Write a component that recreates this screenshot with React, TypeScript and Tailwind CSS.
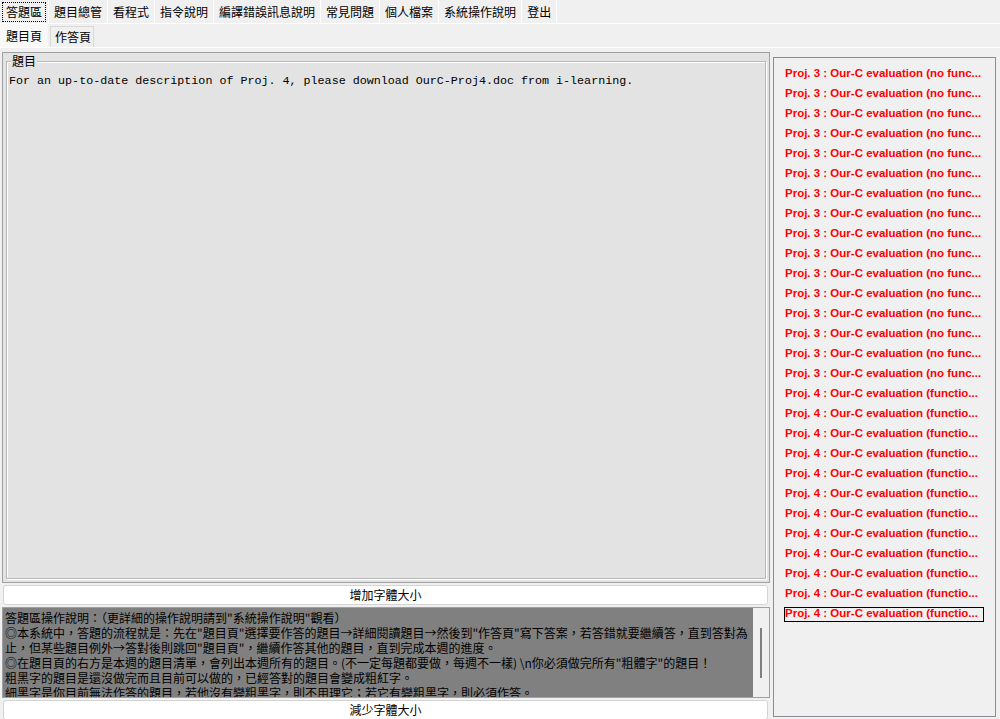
import React from 'react'

const cjk = "font-['Noto_Sans_CJK_TC','Noto_Sans_CJK_SC',sans-serif]"

const menus = ['答題區', '題目總管', '看程式', '指令說明', '編譯錯誤訊息說明', '常見問題', '個人檔案', '系統操作說明', '登出']

const helpLines = [
  '答題區操作說明：（更詳細的操作說明請到"系統操作說明"觀看）',
  '◎本系統中，答題的流程就是：先在"題目頁"選擇要作答的題目→詳細閱讀題目→然後到"作答頁"寫下答案，若答錯就要繼續答，直到答對為',
  '止，但某些題目例外→答對後則跳回"題目頁"，繼續作答其他的題目，直到完成本週的進度。',
  '◎在題目頁的右方是本週的題目清單，會列出本週所有的題目。(不一定每題都要做，每週不一樣) \\n你必須做完所有"粗體字"的題目！',
  '粗黑字的題目是還沒做完而且目前可以做的，已經答對的題目會變成粗紅字。',
  '細黑字是你目前無法作答的題目，若他沒有變粗黑字，則不用理它；若它有變粗黑字，則必須作答。',
]

const problems = [
  ...Array(16).fill('Proj. 3 : Our-C evaluation (no func...'),
  ...Array(12).fill('Proj. 4 : Our-C evaluation (functio...'),
]

const FontButton: React.FC<{ label: string }> = ({ label }) => (
  <div className="h-[20px] shrink-0 bg-white border border-[#d4d4d4] rounded-[3px] flex items-center justify-center text-[12px] text-black">
    {label}
  </div>
)

export default function App() {
  return (
    <div className={`w-[1000px] h-[719px] bg-[#f0f0f0] flex flex-col overflow-hidden text-black ${cjk}`}>
      {/* top menu */}
      <div className="h-[24px] shrink-0 flex items-stretch border-b border-white">
        {menus.map((m, i) => (
          <div key={m} className="flex items-center px-[2px] border-r border-white text-[12px] leading-none">
            <span className={i === 0 ? 'px-[3px] py-[3px] border border-dotted border-black' : 'px-[3px] py-[4px]'}>{m}</span>
          </div>
        ))}
      </div>
      {/* sub tabs */}
      <div className="h-[24px] shrink-0 flex items-end border-b border-white text-[12px] leading-none">
        <div className="h-[23px] w-[48px] bg-[#f8f8f8] flex items-center pl-[6px]">題目頁</div>
        <div className="h-[21px] ml-[2px] w-[44px] border border-b-0 border-[#d9d9d9] flex items-center pl-[4px]">作答頁</div>
      </div>

      <div className="flex flex-1 min-h-0">
        {/* left column */}
        <div className="w-[770px] shrink-0 pl-[2px] pt-[4px] flex flex-col">
          <div className="h-[531px] shrink-0 border border-[#a0a0a0] bg-[#e3e3e3] px-[3px] pt-[8px] pb-[3px]">
            <div className="relative h-full border border-[#b8b8b8] shadow-[inset_1px_1px_0_#fff,1px_1px_0_#fff] pt-[12px] px-[2px]">
              <div className="absolute left-[4px] -top-[8px] bg-[#e3e3e3] px-[1px] text-[12px] leading-[14px]">題目</div>
              <div className="font-['Liberation_Mono',monospace] text-[11.7px] leading-[14px] whitespace-nowrap">
                For an up-to-date description of Proj. 4, please download OurC-Proj4.doc from i-learning.
              </div>
            </div>
          </div>
          <div className="mt-[2px] pr-[2px] pl-[1px]">
            <FontButton label="增加字體大小" />
          </div>
          <div className="mt-[2px] h-[91px] shrink-0 flex border border-[#a0a0a0] bg-[#808080]">
            <div className="flex-1 overflow-hidden pl-[2px] pt-[2px] text-[12px] leading-[15px]">
              {helpLines.map((l, i) => (
                <div key={i} className="whitespace-nowrap">{l}</div>
              ))}
            </div>
            <div className="w-[16px] shrink-0 bg-[#f0f0f0] flex justify-center pt-[20px]">
              <div className="w-[2px] h-[50px] bg-[#808080]" />
            </div>
          </div>
          <div className="mt-[2px] pr-[2px] pl-[1px]">
            <FontButton label="減少字體大小" />
          </div>
        </div>

        {/* right problem list */}
        <div className="ml-[3px] mt-[9px] mb-[2px] w-[223px] border border-[#8a8c94] bg-[#f0f0f0] pt-[6px] pl-[10px] font-['Liberation_Sans',Arial,sans-serif] font-bold text-[11.5px] text-[#ff0000]">
          {problems.map((p, i) => (
            <div key={i} className="h-[20px] flex items-center">
              <span className={i === problems.length - 1 ? 'w-[200px] h-[15px] flex items-center border border-black whitespace-nowrap' : 'pl-[1px] whitespace-nowrap'}>
                {p}
              </span>
            </div>
          ))}
        </div>
      </div>
    </div>
  )
}
